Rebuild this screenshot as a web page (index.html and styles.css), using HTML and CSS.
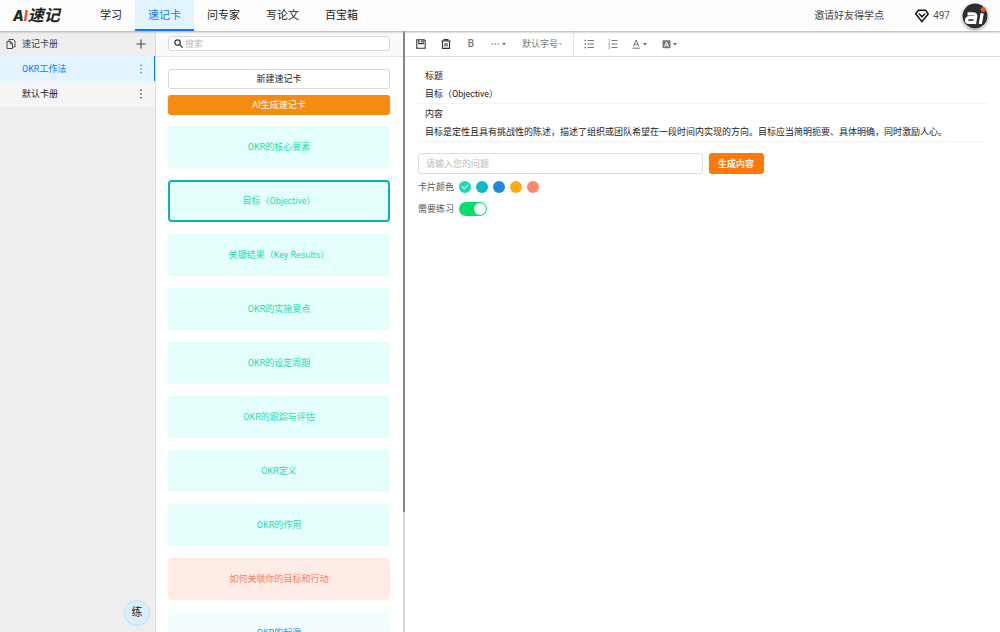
FILE: index.html
```html
<!DOCTYPE html>
<html lang="zh-CN">
<head>
<meta charset="utf-8">
<meta name="viewport" content="width=device-width, initial-scale=1">
<title>AI速记</title>
<link rel="stylesheet" href="styles.css">
</head>
<body>
<header class="topbar">
  <a class="logo" href="#">A<span class="logo-i">I</span><span class="logo-cn">速记</span></a>
  <nav class="nav">
    <a class="nav-link" href="#">学习</a>
    <a class="nav-link nav-active" href="#">速记卡</a>
    <a class="nav-link" href="#">问专家</a>
    <a class="nav-link" href="#">写论文</a>
    <a class="nav-link" href="#">百宝箱</a>
  </nav>
  <a class="invite" href="#">邀请好友得学点</a>
  <div class="points">
    <svg width="14" height="14" viewBox="0 0 14 14" fill="none" stroke="#111" stroke-width="1.5" stroke-linejoin="round"><path d="M3.4 1.2h7.2L13.2 5 7 12.6.8 5z"/><path d="M4.300 5l2.700 2.700L9.700 5" stroke-linecap="round"/></svg>
    <span>497</span>
  </div>
  <button class="avatar" aria-label="账户">
    <svg width="26" height="26" viewBox="0 0 26 26"><circle cx="13" cy="13" r="12.5" fill="#2b2d2f"/><g fill="none" stroke="#fff" stroke-width="3.2"><path d="M5.500 10.800H11q3.200 0 2.700 3L12.500 21"/><path d="M13 14.600H7.500q-2.600 0-3 2.400t2.200 2.400h5.500"/><path d="M20.200 10.200L18.300 21"/></g><circle cx="21.200" cy="6.600" r="2.500" fill="#f4511e"/></svg>
  </button>
</header>
<div class="workspace">
  <aside class="sidebar">
    <div class="book-head">
      <svg width="10" height="10" viewBox="0 0 10 10" fill="none" stroke="#454b54" stroke-width="1"><path d="M3 2V.5h4.500L9 2v6H7.200"/><path d="M1 2.500h3.500L6.500 4.500v5H1z"/><path d="M4.300 2.800v2h2"/></svg>
      <span class="grow">速记卡册</span>
      <button class="icon-btn" aria-label="新建卡册"><svg width="10" height="10" viewBox="0 0 10 10" stroke="#454b54" stroke-width="1.100"><path d="M5 .5v9M.5 5h9"/></svg></button>
    </div>
    <div class="book book-active">
      <a class="grow" href="#">OKR工作法</a>
      <button class="icon-btn" aria-label="OKR工作法选项"><svg width="10" height="10" viewBox="0 0 10 10" fill="currentColor"><circle cx="5" cy="1.200" r=".8"/><circle cx="5" cy="5" r=".8"/><circle cx="5" cy="8.800" r=".8"/></svg></button>
    </div>
    <div class="book">
      <a class="grow" href="#">默认卡册</a>
      <button class="icon-btn" aria-label="默认卡册选项"><svg width="10" height="10" viewBox="0 0 10 10" fill="currentColor"><circle cx="5" cy="1.200" r=".8"/><circle cx="5" cy="5" r=".8"/><circle cx="5" cy="8.800" r=".8"/></svg></button>
    </div>
    <button class="practice">练</button>
  </aside>
  <section class="cards">
    <div class="search-bar">
      <label class="search">
        <svg width="9" height="9" viewBox="0 0 9 9" fill="none" stroke="#333" stroke-width="1.200"><circle cx="3.600" cy="3.600" r="2.700"/><path d="M5.600 5.600l3 3"/></svg>
        <input class="search-input" type="text" placeholder="搜索" aria-label="搜索">
      </label>
    </div>
    <div class="actions">
      <button class="new-card">新建速记卡</button>
      <button class="ai-card">AI生成速记卡</button>
    </div>
    <div class="card-list">
      <button class="card">OKR的核心要素</button>
      <button class="card card-selected">目标（Objective）</button>
      <button class="card">关键结果（Key Results）</button>
      <button class="card">OKR的实施要点</button>
      <button class="card">OKR的设定周期</button>
      <button class="card">OKR的跟踪与评估</button>
      <button class="card">OKR定义</button>
      <button class="card">OKR的作用</button>
      <button class="card card-coral">如何关联你的目标和行动</button>
      <button class="card card-blue">OKR的起源</button>
    </div>
  </section>
  <div class="scroll-track"><div class="scroll-thumb"></div></div>
  <main class="editor">
    <div class="toolbar">
      <div class="tools tools-main">
        <button class="icon-btn" aria-label="保存"><svg width="10" height="10" viewBox="0 0 10 10" fill="none" stroke="#333" stroke-width="1.100"><path d="M.8.8h7.400l1 1v7.400H.8z"/><path d="M2.800.8v3.800h4.400V.8M5.500 1.800v1.500"/></svg></button>
        <button class="icon-btn" aria-label="删除"><svg width="10" height="10" viewBox="0 0 10 10" fill="none" stroke="#333" stroke-width="1.100"><path d="M.3 2h9.400M3 2V.6h4V2M1.500 2v7.400h7V2M4 4v3.500M6 4v3.500"/></svg></button>
        <button class="icon-btn bold" aria-label="加粗">B</button>
        <button class="icon-btn" aria-label="更多"><svg width="16" height="10" viewBox="0 0 16 10" fill="#777"><circle cx="1.200" cy="5" r=".8"/><circle cx="4.200" cy="5" r=".8"/><circle cx="7.200" cy="5" r=".8"/><path d="M11 4h4l-2 2.500z"/></svg></button>
        <button class="icon-btn font-size">默认字号<svg width="3" height="10" viewBox="0 0 3 10" fill="#888"><path d="M0 4.500h3l-1.500 1.500z"/></svg></button>
      </div>
      <div class="tools tools-format">
        <button class="icon-btn" aria-label="无序列表"><svg width="10" height="10" viewBox="0 0 10 10" stroke="#777"><path d="M3.500 1.500H10M3.500 5H10M3.500 8.500H10"/><path d="M.5 1.500H2M.5 5H2M.5 8.500H2" stroke-width="1.500"/></svg></button>
        <button class="icon-btn" aria-label="有序列表"><svg width="10" height="10" viewBox="0 0 10 10" fill="none" stroke="#777"><path d="M3.500 1.500H9.500M3.500 5H9.500M3.500 8.500H9.500"/><path d="M.5.500h.8v2M.4 4h1v1l-1 1h1.200M.4 7.500h1.100v2H.4" stroke-width=".6"/></svg></button>
        <button class="icon-btn" aria-label="文字颜色"><svg width="16" height="10" viewBox="0 0 16 10" fill="none" stroke="#777"><path d="M1.500 7.500L4.200 1l2.700 6.500M2.400 5.300h3.600M.5 9.200h7.500"/><path d="M11 4h4l-2 2.500z" fill="#666" stroke="none"/></svg></button>
        <button class="icon-btn" aria-label="背景颜色"><svg width="16" height="10" viewBox="0 0 16 10" fill="none"><rect x=".5" y="1.200" width="8" height="8" rx="1" fill="#777"/><path d="M2.500 7.700L4.500 3l2 4.700M3.200 6.200h2.600" stroke="#fff"/><path d="M11 4h4l-2 2.500z" fill="#666"/></svg></button>
      </div>
    </div>
    <div class="document">
      <div class="field">
        <h2 class="field-name">标题</h2>
        <p class="field-text">目标（Objective）</p>
      </div>
      <div class="field">
        <h2 class="field-name">内容</h2>
        <p class="field-text">目标是定性且具有挑战性的陈述，描述了组织或团队希望在一段时间内实现的方向。目标应当简明扼要、具体明确，同时激励人心。</p>
      </div>
      <form class="ask">
        <input class="ask-input" type="text" placeholder="请输入您的问题" aria-label="请输入您的问题">
        <button class="ask-btn" type="button">生成内容</button>
      </form>
      <div class="option" role="radiogroup" aria-labelledby="color-label">
        <span id="color-label">卡片颜色</span>
        <div class="swatches">
          <input class="swatch swatch-green" type="radio" name="color" aria-label="绿色" checked>
          <input class="swatch swatch-teal" type="radio" name="color" aria-label="青色">
          <input class="swatch swatch-blue" type="radio" name="color" aria-label="蓝色">
          <input class="swatch swatch-amber" type="radio" name="color" aria-label="橙色">
          <input class="swatch swatch-coral" type="radio" name="color" aria-label="珊瑚色">
        </div>
      </div>
      <div class="option">
        <label for="practice-switch">需要练习</label>
        <input class="switch" id="practice-switch" type="checkbox" role="switch" checked>
      </div>
    </div>
  </main>
</div>
</body>
</html>
```
FILE: styles.css
```css
* { box-sizing: border-box; }
body {
  margin: 0;
  height: 100vh;
  display: flex;
  flex-direction: column;
  overflow: hidden;
  background: #fff;
  color: #222;
  font: 9px/18px Roboto, "Noto Sans CJK SC", sans-serif;
}
a { color: inherit; text-decoration: none; }
button, input { font: inherit; color: inherit; margin: 0; }
button { padding: 0; border: 0; background: none; cursor: pointer; }
svg { display: block; flex: none; }
.grow { flex: 1; }

.topbar {
  position: relative;
  z-index: 1;
  flex: none;
  height: 31px;
  display: flex;
  align-items: center;
  padding: 0 12px 0 13px;
  background: #fdfdfd;
  box-shadow: 0 1px 2px #aaa;
}
.logo {
  width: 74px;
  display: flex;
  align-items: center;
  font: italic 800 14px/31px Inter, "Noto Sans CJK SC", sans-serif;
  color: #222;
}
.logo-i { color: #f4511e; }
.logo-cn { font-size: 16px; font-weight: 700; }
.nav { flex: 1; display: flex; align-self: stretch; font-size: 11px; }
.nav-link { display: flex; align-items: center; padding: 2px 13px 0; border-bottom: 2px solid transparent; }
.nav-active { background: #e2f5ff; color: #0d7bff; border-color: #0d7bff; }
.invite { font-size: 10px; color: #444; }
.points { display: flex; align-items: center; gap: 4px; margin: 0 12px 0 31px; font-size: 10px; color: #555; }
.avatar { border-radius: 50%; box-shadow: 0 1px 3px #999; }

.workspace { flex: 1; min-height: 0; display: flex; }
.icon-btn { display: flex; align-items: center; }
.sidebar { position: relative; flex: none; width: 156px; background: #eee; border-right: 1px solid #ddd; }
.book-head, .book { height: 25px; display: flex; align-items: center; padding-right: 9px; }
.book-head { padding-left: 6px; gap: 6px; color: #353b48; }
.book { padding-left: 22px; background: #f5f5f5; }
.book-active { background: #e2f5ff; color: #0d7bff; border-right: 1px solid #0d7bff; padding-right: 8px; }
.practice {
  position: absolute;
  right: 5px;
  bottom: 6px;
  width: 26px;
  height: 26px;
  border: 1px solid #b5dffb;
  border-radius: 50%;
  background: #daf0fe;
  font-size: 11px;
}

.cards { flex: none; width: 247px; display: flex; flex-direction: column; overflow: hidden; }
.search-bar { flex: none; height: 26px; padding: 5px 13px 5px 12px; background: #fafafa; border-bottom: 1px solid #e4e4e4; }
.search { height: 15px; display: flex; align-items: center; gap: 2px; padding: 0 5px; border: 1px solid #d9d9d9; border-radius: 3px; background: #fff; }
.search-input { flex: 1; min-width: 0; height: 13px; padding: 0; border: 0; background: none; }
.search-input::placeholder, .ask-input::placeholder { color: #bbb; opacity: 1; }
.actions { display: flex; flex-direction: column; gap: 6px; padding: 12px 13px 0 12px; }
.new-card, .ai-card { height: 20px; border-radius: 3px; line-height: 16px; }
.new-card { border: 1px solid #d9d9d9; }
.ai-card { background: #f58b12; color: #fff; }
.card-list { display: flex; flex-direction: column; gap: 12px; padding: 11px 13px 0 12px; }
.card { flex: none; height: 42px; border-radius: 4px; background: #e4fefb; color: #1fdcb4; }
.card-selected { border: 2px solid #0ab1bb; }
.card-coral { background: #fdebe6; color: #fa8261; }
.card-blue { background: #f3fdff; color: #1e88e5; }
.scroll-track { flex: none; width: 2px; background: #d8d8d8; }
.scroll-thumb { height: 80%; background: #858585; }

.editor { flex: 1; min-width: 0; }
.toolbar { height: 26px; display: flex; border-bottom: 1px solid #ddd; color: #777; }
.tools { display: flex; align-items: center; }
.tools-main { gap: 15px; padding: 0 11px; border-right: 1px solid #e4e4e4; }
.tools-format { gap: 14px; padding-left: 10px; }
.bold { width: 10px; justify-content: center; font-size: 10px; font-weight: 500; }
.font-size { gap: 1px; }
.document { padding: 9px 13px; }
.field { padding: 1px 7px 0; border-bottom: 1px solid #f3f3f3; }
.field-name, .field-text { margin: 0; font-size: 9px; font-weight: 400; line-height: 18px; }
.ask { display: flex; gap: 6px; margin: 11px 0 2px; }
.ask-input { width: 50%; height: 21px; padding: 0 7px; border: 1px solid #ddd; border-radius: 3px; }
.ask-btn { width: 55px; height: 21px; border-radius: 3px; background: #ff7808; color: #fff; font-weight: 700; }
.option { height: 22px; display: flex; align-items: center; gap: 5px; color: #555; }
.swatches { display: flex; gap: 5px; }
.swatch { appearance: none; width: 12px; height: 12px; border-radius: 50%; display: grid; place-items: center; }
.swatch:checked::after { content: ""; width: 5px; height: 3px; margin-bottom: 2px; border: solid #fff; border-width: 0 0 1px 1px; transform: rotate(-45deg); }
.swatch-green { background: #15dcb5; }
.swatch-teal { background: #0fb9c5; }
.swatch-blue { background: #1e88e5; }
.swatch-amber { background: #ffab1a; }
.swatch-coral { background: #fc8769; }
.switch { appearance: none; width: 28px; height: 14px; padding: 1px; border-radius: 7px; background: #bbb; display: flex; }
.switch::after { content: ""; width: 12px; height: 12px; border-radius: 50%; background: #fff; }
.switch:checked { background: #06df6b; justify-content: flex-end; }
```
